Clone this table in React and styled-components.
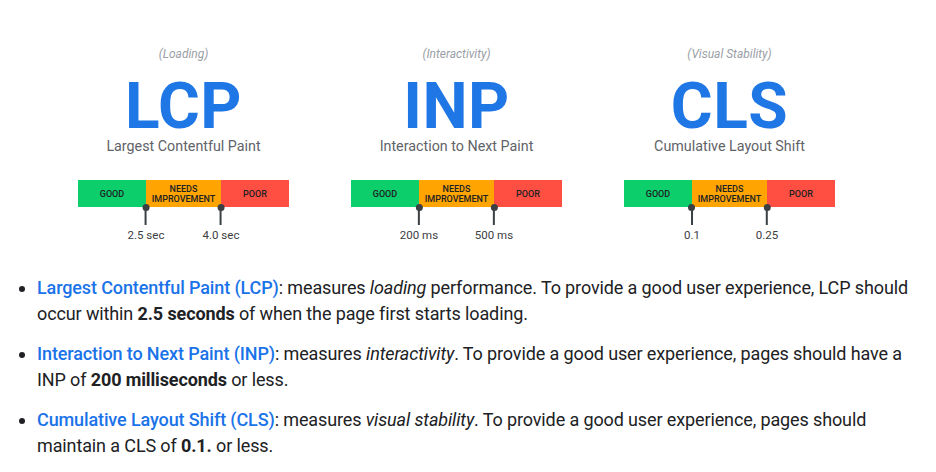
import React from "react";
import styled, { createGlobalStyle } from "styled-components";

const Global = createGlobalStyle`
  html, body { margin: 0; padding: 0; background: #fff; }
  body { font-family: Roboto, "Noto Sans", Arial, sans-serif; color: #202124; }
`;

const Page = styled.div`
  width: 936px;
  height: 472px;
  overflow: hidden;
  background: #fff;
`;

const Metrics = styled.div`
  display: flex;
  gap: 62px;
  padding: 47px 0 0 78px;
`;

const Metric = styled.div`
  width: 211px;
  display: flex;
  flex-direction: column;
  align-items: center;
`;

const Category = styled.div`
  font-size: 12px;
  line-height: 15px;
  font-style: italic;
  color: #9aa0a6;
`;

const Acronym = styled.div`
  margin-top: 14px;
  font-size: 64px;
  line-height: 62px;
  font-weight: 700;
  color: #1f77e6;
  letter-spacing: 0.5px;
`;

const Name = styled.div`
  font-size: 14.3px;
  line-height: 16px;
  color: #5f6368;
`;

const Bar = styled.div`
  margin-top: 26px;
  width: 100%;
  height: 27px;
  display: grid;
  grid-template-columns: 68px 75px 68px;
`;

const Segment = styled.div`
  background: ${(p) => p.$color};
  display: flex;
  align-items: center;
  justify-content: center;
  text-align: center;
  font-size: 9px;
  line-height: 10px;
  font-weight: 500;
  color: #202124;
  text-transform: uppercase;
`;

const Scale = styled.div`
  position: relative;
  width: 100%;
  height: 40px;
`;

const Marker = styled.div`
  position: absolute;
  top: -3px;
  left: ${(p) => p.$at}px;
  display: flex;
  flex-direction: column;
  align-items: center;
  transform: translateX(-50%);
`;

const Dot = styled.span`
  width: 7px;
  height: 7px;
  border-radius: 50%;
  background: #3c4043;
`;

const Stem = styled.span`
  width: 2px;
  height: 15px;
  margin-top: -1px;
  background: #3c4043;
`;

const Threshold = styled.span`
  margin-top: 3px;
  font-size: 11.5px;
  line-height: 14px;
  color: #3c4043;
  white-space: nowrap;
`;

const List = styled.ul`
  margin: 28px 0 0 0;
  padding: 0 0 0 37px;
  width: 890px;
  font-size: 18px;
  line-height: 26px;
  letter-spacing: -0.12px;
  color: #202124;
`;

const Item = styled.li`
  margin-bottom: 14px;
`;

const Term = styled.span`
  color: #1a73e8;
  font-weight: 500;
`;

const metrics = [
  {
    category: "(Loading)",
    acronym: "LCP",
    name: "Largest Contentful Paint",
    thresholds: ["2.5 sec", "4.0 sec"],
  },
  {
    category: "(Interactivity)",
    acronym: "INP",
    name: "Interaction to Next Paint",
    thresholds: ["200 ms", "500 ms"],
  },
  {
    category: "(Visual Stability)",
    acronym: "CLS",
    name: "Cumulative Layout Shift",
    thresholds: ["0.1", "0.25"],
  },
];

export default function App() {
  return (
    <Page>
      <Global />
      <Metrics>
        {metrics.map((m) => (
          <Metric key={m.acronym}>
            <Category>{m.category}</Category>
            <Acronym>{m.acronym}</Acronym>
            <Name>{m.name}</Name>
            <Bar>
              <Segment $color="#0cce6b">Good</Segment>
              <Segment $color="#ffa400">
                Needs
                <br />
                Improvement
              </Segment>
              <Segment $color="#ff4e42">Poor</Segment>
            </Bar>
            <Scale>
              <Marker $at={68}>
                <Dot />
                <Stem />
                <Threshold>{m.thresholds[0]}</Threshold>
              </Marker>
              <Marker $at={143}>
                <Dot />
                <Stem />
                <Threshold>{m.thresholds[1]}</Threshold>
              </Marker>
            </Scale>
          </Metric>
        ))}
      </Metrics>
      <List>
        <Item>
          <Term>Largest Contentful Paint (LCP)</Term>: measures <em>loading</em>{" "}
          performance. To provide a good user experience, LCP should occur within{" "}
          <strong>2.5 seconds</strong> of when the page first starts loading.
        </Item>
        <Item>
          <Term>Interaction to Next Paint (INP)</Term>: measures{" "}
          <em>interactivity</em>. To provide a good user experience, pages should
          have a INP of <strong>200 milliseconds</strong> or less.
        </Item>
        <Item>
          <Term>Cumulative Layout Shift (CLS)</Term>: measures{" "}
          <em>visual stability</em>. To provide a good user experience, pages
          should maintain a CLS of <strong>0.1.</strong> or less.
        </Item>
      </List>
    </Page>
  );
}
